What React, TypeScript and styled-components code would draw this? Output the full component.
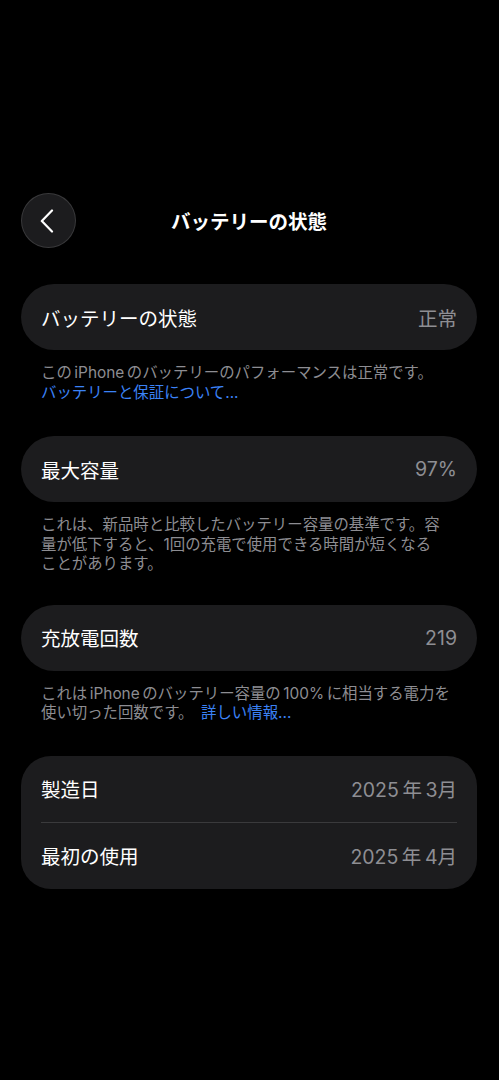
import React from "react";
import styled, { createGlobalStyle } from "styled-components";

const GlobalStyle = createGlobalStyle`
  html, body {
    margin: 0;
    padding: 0;
    background: #000;
  }
  body {
    font-family: "Inter", "Noto Sans CJK JP", "Noto Sans", sans-serif;
    -webkit-font-smoothing: antialiased;
  }
`;

const Screen = styled.div`
  width: 499px;
  min-height: 1080px;
  background: #000;
  box-sizing: border-box;
  padding: 193px 22px 0 21px;
  display: flex;
  flex-direction: column;
`;

const Header = styled.header`
  display: grid;
  grid-template-columns: 55px 1fr 55px;
  align-items: center;
  height: 55px;
  margin-bottom: 36px;
`;

const BackButton = styled.button`
  width: 55px;
  height: 55px;
  border-radius: 50%;
  background: #1c1c1e;
  border: 1px solid rgba(255, 255, 255, 0.13);
  box-sizing: border-box;
  display: flex;
  align-items: center;
  justify-content: center;
  padding: 0 3px 0 0;
  cursor: pointer;
`;

const Title = styled.h1`
  margin: 0;
  text-align: center;
  color: #fff;
  font-size: 19.5px;
  font-weight: 700;
  letter-spacing: 0;
`;

const Card = styled.section<{ $radius?: number }>`
  background: #1c1c1e;
  border-radius: ${(p) => p.$radius ?? 33}px;
  display: flex;
  flex-direction: column;
`;

const Row = styled.div`
  height: 66px;
  display: flex;
  align-items: center;
  justify-content: space-between;
  padding: 0 20px;
`;

const Divider = styled.div`
  height: 1px;
  margin: 0 20px;
  background: #3a3a3c;
`;

const Label = styled.span`
  color: #fff;
  font-size: 19.5px;
  font-weight: 400;
`;

const Value = styled.span`
  color: #8e8e93;
  font-size: 19.5px;
  font-weight: 400;
`;

const Note = styled.p<{ $after?: number }>`
  margin: 13px 0 ${(p) => p.$after ?? 33}px 20px;
  width: 410px;
  color: #8d8d92;
  font-size: 15.4px;
  line-height: 19.5px;
`;

// keeps a short phrase together on one line
const Phrase = styled.span`
  white-space: nowrap;
`;

const Link = styled.a`
  color: #3b82f6;
  text-decoration: none;
`;

// narrow gaps used between Japanese and Latin runs
const gap = "\u2006";
const dateGap = "\u2009";

function Chevron() {
  return (
    <svg width="14" height="24" viewBox="0 0 14 24" fill="none">
      <path
        d="M12 1.5 L1.8 12 L12 22.5"
        stroke="#fff"
        strokeWidth="2.2"
        strokeLinecap="round"
        strokeLinejoin="round"
      />
    </svg>
  );
}

export default function App() {
  return (
    <>
      <GlobalStyle />
      <Screen>
        <Header>
          <BackButton aria-label="戻る">
            <Chevron />
          </BackButton>
          <Title>バッテリーの状態</Title>
          <span />
        </Header>

        <Card>
          <Row>
            <Label>バッテリーの状態</Label>
            <Value>正常</Value>
          </Row>
        </Card>
        <Note $after={34}>
          {`この${gap}iPhone${gap}のバッテリーのパフォーマンスは正常です。`}
          <br />
          <Link href="#">バッテリーと保証について...</Link>
        </Note>

        <Card>
          <Row>
            <Label>最大容量</Label>
            <Value>97%</Value>
          </Row>
        </Card>
        <Note $after={31}>
          これは、新品時と比較したバッテリー容量の基準です。容量が低下すると、1回の充電で使用できる時間が短くなる
          <Phrase>ことがあります。</Phrase>
        </Note>

        <Card>
          <Row>
            <Label>充放電回数</Label>
            <Value>219</Value>
          </Row>
        </Card>
        <Note $after={33}>
          {`これは${gap}iPhone${gap}のバッテリー容量の${gap}100%${gap}に相当する電力を使い切った回数です。\u2002`}
          <Link href="#">詳しい情報...</Link>
        </Note>

        <Card $radius={30}>
          <Row>
            <Label>製造日</Label>
            <Value>{`2025${dateGap}年${dateGap}3月`}</Value>
          </Row>
          <Divider />
          <Row>
            <Label>最初の使用</Label>
            <Value>{`2025${dateGap}年${dateGap}4月`}</Value>
          </Row>
        </Card>
      </Screen>
    </>
  );
}
